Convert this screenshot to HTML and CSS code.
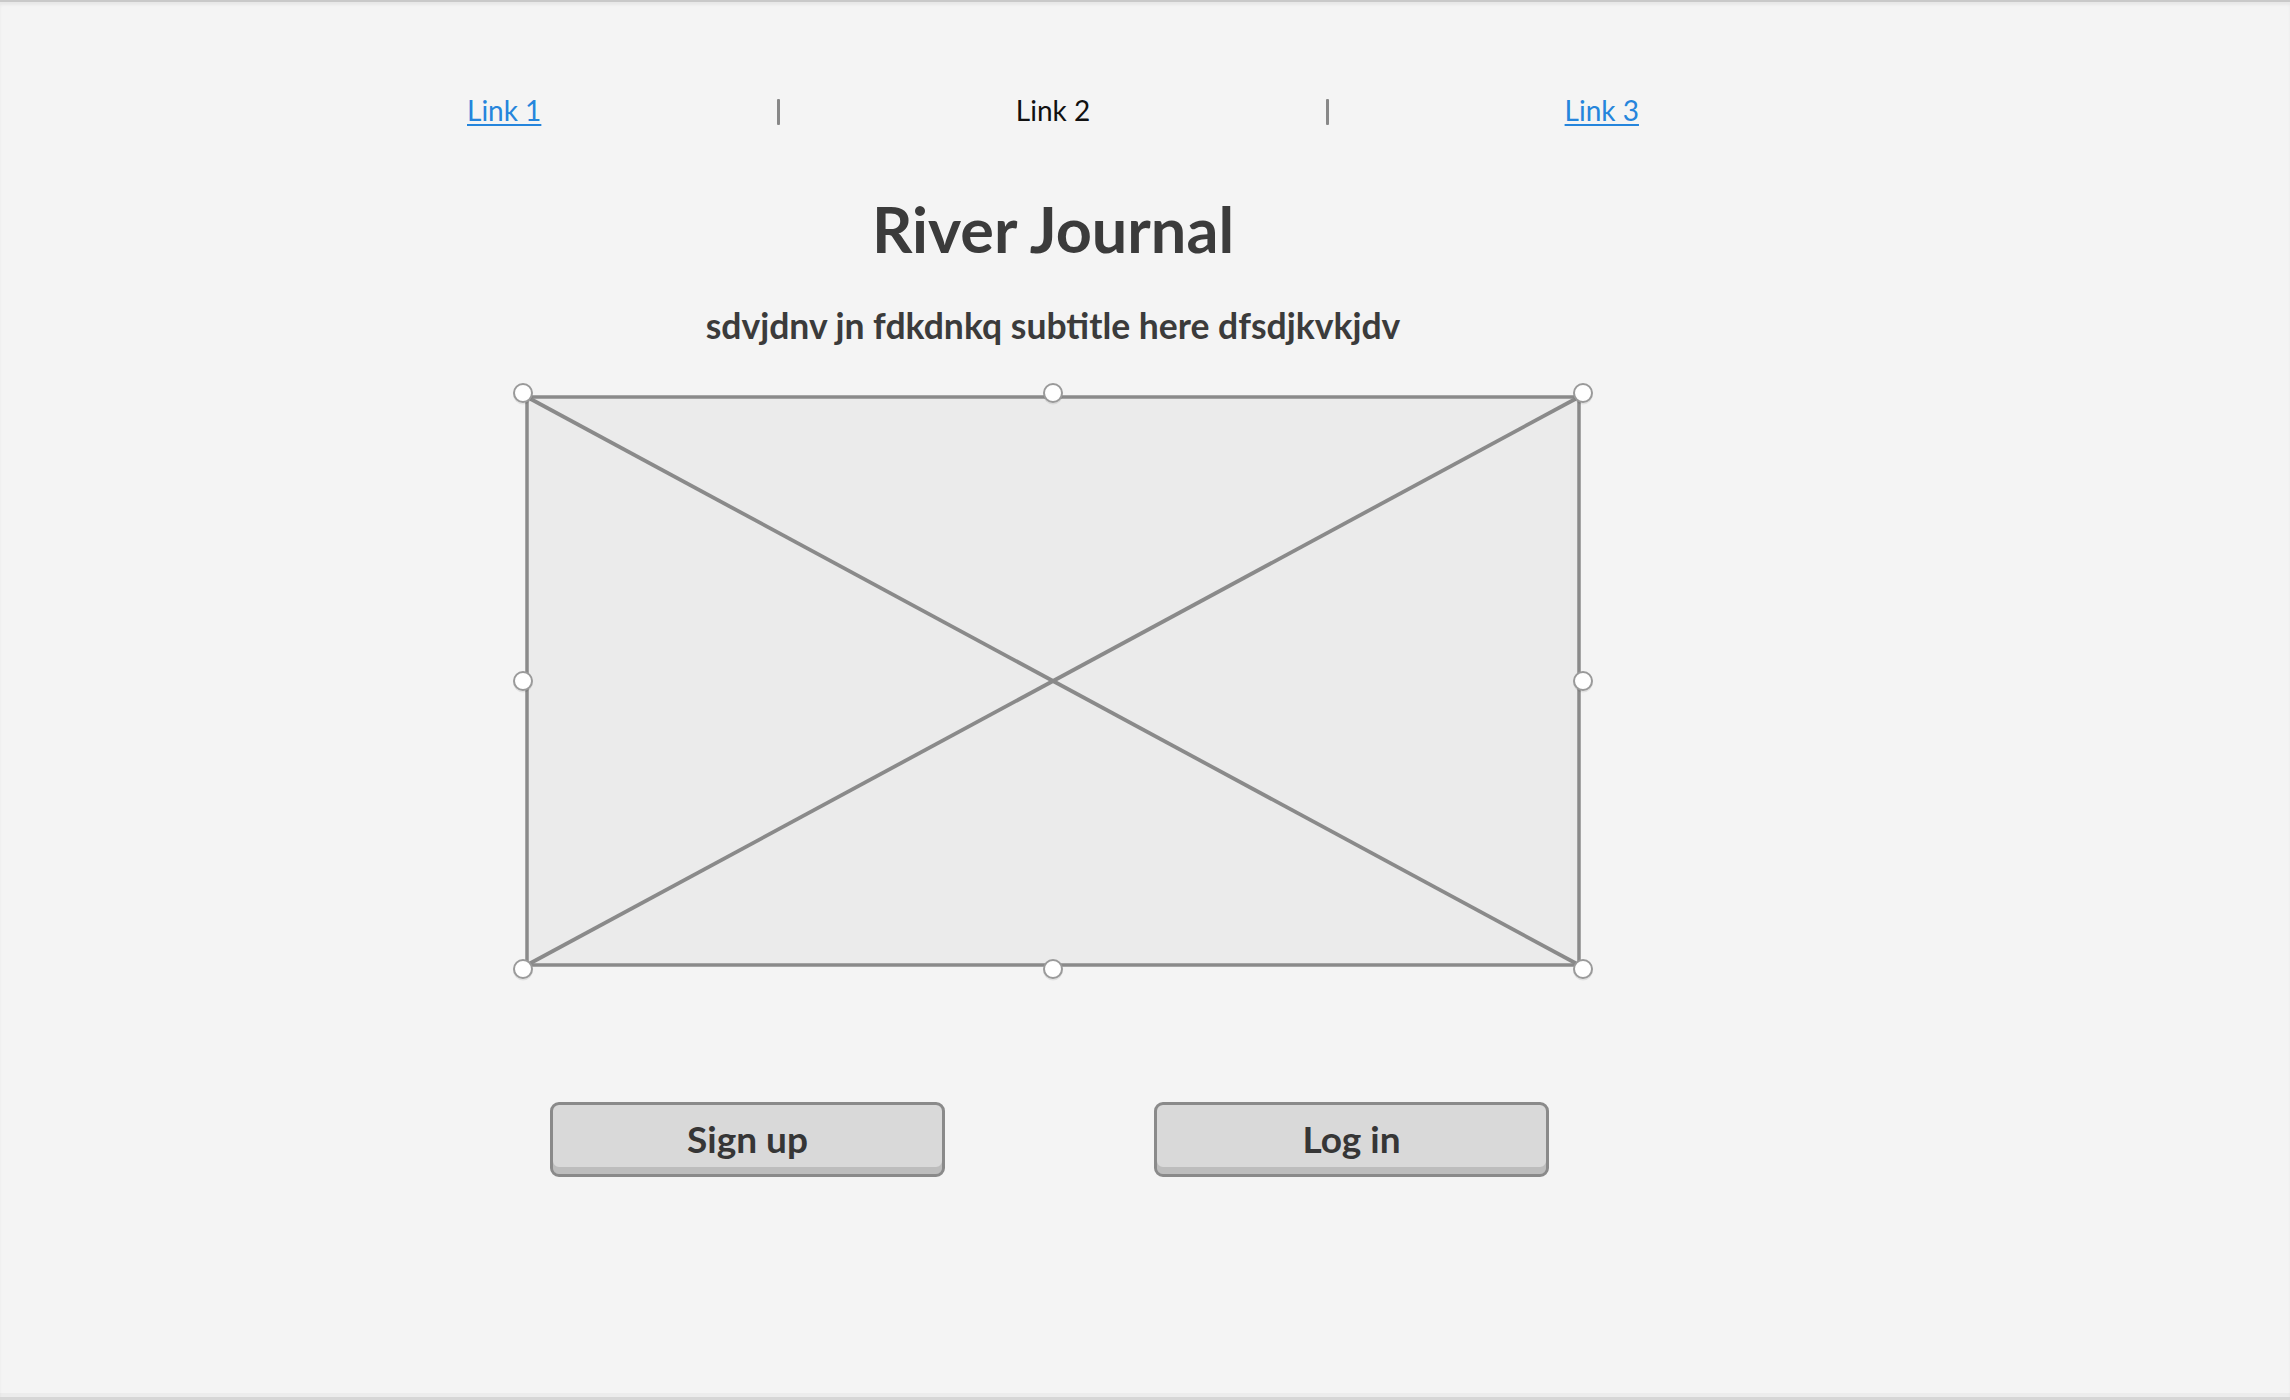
FILE: index.html
```html
<!DOCTYPE html>
<html lang="en">
<head>
<meta charset="utf-8">
<title>River Journal</title>
<link rel="stylesheet" href="styles.css">
</head>
<body>
<div class="page">
  <div class="content">
    <nav class="nav">
      <a class="nav-link" href="#">Link 1</a>
      <span class="sep"></span>
      <span class="nav-current">Link 2</span>
      <span class="sep"></span>
      <a class="nav-link" href="#">Link 3</a>
    </nav>
    <h1 class="title">River Journal</h1>
    <p class="subtitle">sdvjdnv jn fdkdnkq subtitle here dfsdjkvkjdv</p>
    <div class="image-wrap">
      <svg class="image" width="1084" height="600" viewBox="0 0 1084 600" xmlns="http://www.w3.org/2000/svg">
        <rect x="16" y="16" width="1052" height="568" fill="#ebebeb" stroke="#8a8a8a" stroke-width="3.5"/>
        <line x1="16" y1="16" x2="1068" y2="584" stroke="#8a8a8a" stroke-width="3.8"/>
        <line x1="1068" y1="16" x2="16" y2="584" stroke="#8a8a8a" stroke-width="3.8"/>
        <g fill="rgba(0,0,0,0.08)">
          <circle cx="12" cy="13.5" r="10"/>
          <circle cx="542" cy="13.5" r="10"/>
          <circle cx="1072" cy="13.5" r="10"/>
          <circle cx="12" cy="301.5" r="10"/>
          <circle cx="1072" cy="301.5" r="10"/>
          <circle cx="12" cy="589.5" r="10"/>
          <circle cx="542" cy="589.5" r="10"/>
          <circle cx="1072" cy="589.5" r="10"/>
        </g>
        <g fill="#ffffff" stroke="#9a9a9a" stroke-width="2">
          <circle cx="12" cy="12" r="9"/>
          <circle cx="542" cy="12" r="9"/>
          <circle cx="1072" cy="12" r="9"/>
          <circle cx="12" cy="300" r="9"/>
          <circle cx="1072" cy="300" r="9"/>
          <circle cx="12" cy="588" r="9"/>
          <circle cx="542" cy="588" r="9"/>
          <circle cx="1072" cy="588" r="9"/>
        </g>
      </svg>
    </div>
    <div class="buttons">
      <button class="btn" type="button">Sign up</button>
      <button class="btn" type="button">Log in</button>
    </div>
  </div>
</div>
</body>
</html>
```
FILE: styles.css
```css
html, body {
  margin: 0;
  padding: 0;
}

body {
  background: #f4f4f4;
  font-family: Lato, "Open Sans", "Liberation Sans", sans-serif;
  color: #3b3b3b;
}

.page {
  box-sizing: border-box;
  height: 1400px;
  border-top: 2px solid #c9c9c9;
  border-bottom: 3px solid #d6d6d6;
  box-shadow: inset 0 3px 3px rgba(0, 0, 0, 0.05), inset 0 -4px 0 #ececec;
  background: #f4f4f4;
}

.content {
  width: 1172px;
  margin-left: 467px;
  padding-top: 93px;
}

.nav {
  display: flex;
  justify-content: space-between;
  align-items: center;
  height: 30px;
  font-size: 28px;
  line-height: 30px;
}

.nav-link {
  color: #2585dc;
  text-decoration: underline;
  text-decoration-thickness: 2px;
  text-underline-offset: 3px;
}

.nav-current {
  color: #111111;
}

.sep {
  width: 3px;
  height: 26px;
  border-radius: 1px;
  background: #888888;
  margin-top: 4px;
}

.title {
  margin: 66px 0 0;
  text-align: center;
  font-size: 63px;
  line-height: 76px;
  font-weight: 700;
  letter-spacing: 0;
  color: #3b3b3b;
}

.subtitle {
  margin: 39px 0 0;
  text-align: center;
  font-size: 35.5px;
  line-height: 40px;
  font-weight: 700;
  color: #3b3b3b;
}

.image-wrap {
  margin-top: 35px;
  display: flex;
  justify-content: center;
}

.image {
  display: block;
}

.buttons {
  display: flex;
  gap: 209px;
  padding-left: 83px;
  margin-top: 121px;
}

.btn {
  box-sizing: border-box;
  width: 395px;
  height: 75px;
  padding: 0 0 3px;
  border: 3px solid #8a8a8a;
  border-radius: 9px;
  background: #d9d9d9;
  box-shadow: inset 0 -7px 0 #bdbdbd;
  font-family: Lato, "Open Sans", "Liberation Sans", sans-serif;
  font-size: 37px;
  font-weight: 700;
  color: #363636;
  line-height: 1;
}
```
